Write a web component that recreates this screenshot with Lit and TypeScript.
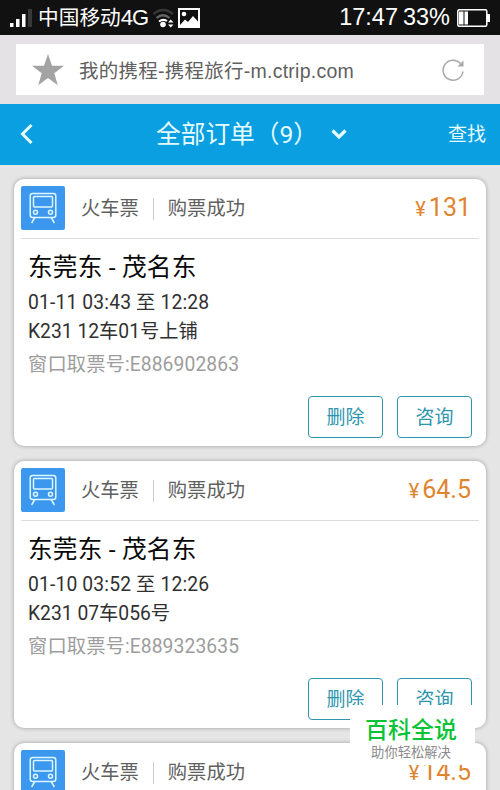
import { LitElement, html, css, svg, TemplateResult } from "lit";
import { customElement, property } from "lit/decorators.js";

interface TrainOrder {
  price: string;
  route: string;
  time: string;
  seat: string;
  ticketNo: string;
}

const ORDERS: TrainOrder[] = [
  {
    price: "131",
    route: "东莞东 - 茂名东",
    time: "01-11 03:43 至 12:28",
    seat: "K231 12车01号上铺",
    ticketNo: "E886902863",
  },
  {
    price: "64.5",
    route: "东莞东 - 茂名东",
    time: "01-10 03:52 至 12:26",
    seat: "K231 07车056号",
    ticketNo: "E889323635",
  },
  {
    price: "14.5",
    route: "",
    time: "",
    seat: "",
    ticketNo: "",
  },
];

const trainIcon = svg`
  <svg width="28" height="32" viewBox="0 0 28 32" fill="none" stroke="#dcf7ff" stroke-width="1.5">
    <rect x="1.2" y="1.5" width="25.6" height="24" rx="2.5"></rect>
    <rect x="4.5" y="4.5" width="19" height="10.5" rx="1"></rect>
    <circle cx="6.5" cy="20.3" r="2"></circle>
    <circle cx="21.5" cy="20.3" r="2"></circle>
    <path d="M5.8 25.5L2.6 31M22.2 25.5L25.4 31"></path>
  </svg>
`;

@customElement("order-card")
class OrderCard extends LitElement {
  @property({ attribute: false }) order!: TrainOrder;

  protected render(): TemplateResult {
    const { order } = this;
    return html`
      <div class="head">
        <span class="icon">${trainIcon}</span>
        <span class="type">火车票</span>
        <span class="bar"></span>
        <span class="status">购票成功</span>
        <span class="price"><span class="yen">¥</span>${order.price}</span>
      </div>
      ${order.route ? this.renderDetail(order) : ""}
    `;
  }

  private renderDetail(order: TrainOrder): TemplateResult {
    return html`
      <div class="detail">
        <div class="route">${order.route}</div>
        <div class="line time">${order.time}</div>
        <div class="line seat">${order.seat}</div>
        <div class="line ticket">窗口取票号:${order.ticketNo}</div>
      </div>
      <div class="actions">
        <button>删除</button>
        <button>咨询</button>
      </div>
    `;
  }

  static styles = css`
    :host {
      display: flex;
      flex-direction: column;
      flex: none;
      box-sizing: border-box;
      height: 267px;
      padding: 0 7px;
      border-radius: 10px;
      background: #fff;
      box-shadow: 0 0 4px rgba(0, 0, 0, 0.32);
    }

    .head {
      display: flex;
      align-items: center;
      box-sizing: border-box;
      height: 60px;
      padding: 0 8px 0 0;
      border-bottom: 1px solid #dcdcdc;
      color: #606060;
      font-size: 19.3px;
      line-height: 28px;
    }

    .icon {
      display: flex;
      align-items: center;
      justify-content: center;
      width: 44px;
      height: 44px;
      margin-bottom: 1px;
      border-radius: 2px;
      background: #3c97ee;
    }

    .type {
      margin-left: 16px;
    }

    .bar {
      width: 1px;
      height: 22px;
      margin: 0 14px;
      background: #ccc;
    }

    .price {
      margin-left: auto;
      color: #e0852f;
      font-size: 25px;
    }

    .yen {
      margin-right: 3px;
      font-size: 20px;
    }

    .detail {
      padding: 13px 7px 0;
      white-space: nowrap;
    }

    .route {
      color: #080808;
      font-size: 24.7px;
      letter-spacing: 0.15px;
      line-height: 32px;
    }

    .line {
      color: #303030;
      font-size: 19.3px;
      line-height: 29px;
    }

    .time {
      margin-top: 4px;
      letter-spacing: 0.15px;
    }

    .ticket {
      margin-top: 4px;
      color: #9d9d9d;
      letter-spacing: 0.1px;
    }

    .actions {
      display: flex;
      justify-content: flex-end;
      gap: 14px;
      margin-top: auto;
      padding: 0 7px 8px;
    }

    button {
      box-sizing: border-box;
      width: 75px;
      height: 42px;
      padding: 0 0 3px;
      border: 1.5px solid #2d96ae;
      border-radius: 4px;
      background: #fff;
      color: #2d96ae;
      font: inherit;
      font-size: 19px;
    }
  `;
}

@customElement("app-root")
class AppRoot extends LitElement {
  protected render(): TemplateResult {
    return html`
      <div class="status">
        ${this.renderSignal()}
        <span class="carrier">中国移动<span class="network">4G</span></span>
        ${this.renderStatusIcons()}
        <span class="clock">17:47</span>
        <span class="percent">33%</span>
        ${this.renderBattery()}
      </div>
      <div class="browser">
        <div class="address">
          <svg class="star" width="32" height="32" viewBox="0 0 32 32" fill="#a3a3a3">
            <path d="M16 0L20 11.8H32L22.3 19.2L25.8 31.2L16 24L6.2 31.2L9.7 19.2L0 11.8H12Z"></path>
          </svg>
          <span class="url">我的携程-携程旅行-m.ctrip.com</span>
          <svg class="reload" width="22" height="22" viewBox="0 0 22 22" fill="none" stroke="#a8a8a8" stroke-width="1.5">
            <path d="M21 12.5A10 10 0 1 1 18.5 4.5"></path>
            <path d="M21.5 1.5V7.5H15.5Z" fill="#a8a8a8" stroke="none"></path>
          </svg>
        </div>
      </div>
      <div class="nav">
        <svg class="back" width="14" height="20" viewBox="0 0 14 20" fill="none" stroke="#e6fbff" stroke-width="3">
          <path d="M11.5 1L2.5 10L11.5 19"></path>
        </svg>
        <span class="title">全部订单（9）</span>
        <svg class="down" width="16" height="12" viewBox="0 0 16 12" fill="none" stroke="#e6fbff" stroke-width="3.2">
          <path d="M1.5 2.5L8 9L14.5 2.5"></path>
        </svg>
        <span class="search">查找</span>
      </div>
      <div class="list">
        ${ORDERS.map((order) => html`<order-card .order=${order}></order-card>`)}
      </div>
      <div class="brand">
        <div class="brand-name">百科全说</div>
        <div class="brand-slogan">助你轻松解决</div>
      </div>
    `;
  }

  private renderSignal(): TemplateResult {
    return html`
      <svg class="signal" width="23" height="18" viewBox="0 0 23 18" fill="#fff">
        <rect x="0" y="14" width="3.5" height="4"></rect>
        <rect x="6" y="10" width="3.5" height="8"></rect>
        <rect x="12" y="5" width="3.5" height="13"></rect>
        <rect x="18" y="0" width="4" height="18" fill="#383838"></rect>
      </svg>
    `;
  }

  private renderStatusIcons(): TemplateResult {
    return html`
      <svg class="wifi" width="23" height="20" viewBox="0 0 23 20" fill="none">
        <path d="M1.5 6Q11 -2 21 6" stroke="#383838" stroke-width="2.4"></path>
        <path d="M4.5 10Q11 4.5 17.5 10" stroke="#666" stroke-width="2.2"></path>
        <path d="M7 13.5Q11 10.5 15 13" stroke="#fff" stroke-width="2"></path>
        <circle cx="11" cy="16.5" r="2.8" fill="#fff"></circle>
        <path d="M16 14.5L18.7 11.5L21.5 14.5ZM16 16.5L18.7 19.5L21.5 16.5Z" fill="#fff"></path>
      </svg>
      <svg class="photo" width="22" height="20" viewBox="0 0 22 20">
        <rect x="1" y="1" width="20" height="18" fill="none" stroke="#fff" stroke-width="2"></rect>
        <circle cx="6" cy="6" r="2.3" fill="#fff"></circle>
        <path d="M2 17L7 11.5L10 14L15 8L20 13.5V18H2Z" fill="#fff"></path>
      </svg>
    `;
  }

  private renderBattery(): TemplateResult {
    return html`
      <svg class="battery" width="33" height="18" viewBox="0 0 33 18">
        <rect x="0.8" y="0.8" width="29" height="16.4" rx="1.5" fill="none" stroke="#fff" stroke-width="1.5"></rect>
        <rect x="2" y="2.5" width="4.5" height="13" fill="#fff"></rect>
        <rect x="7.5" y="2.5" width="3.5" height="13" fill="#fff"></rect>
        <rect x="30" y="5" width="3" height="8" fill="#fff"></rect>
      </svg>
    `;
  }

  static styles = css`
    :host {
      display: flex;
      flex-direction: column;
      position: relative;
      box-sizing: border-box;
      width: 500px;
      height: 790px;
      overflow: hidden;
      background: #e5e5e5;
      font-family: Roboto, "Noto Sans CJK SC", sans-serif;
      white-space: nowrap;
    }

    svg {
      flex: none;
    }

    .status {
      display: flex;
      align-items: center;
      flex: none;
      box-sizing: border-box;
      height: 35px;
      padding: 0 10px;
      background: #111;
      color: #fff;
      font-family: "Liberation Sans", "Noto Sans CJK SC", sans-serif;
      font-size: 23.5px;
      line-height: 35px;
    }

    .carrier {
      margin-left: 5px;
      font-size: 20.7px;
    }

    .network {
      font-size: 22px;
      letter-spacing: -1px;
    }

    .wifi {
      margin-left: 4px;
    }

    .photo {
      margin-left: 3px;
    }

    .clock {
      margin-left: auto;
    }

    .percent {
      margin: 0 7px 0 5px;
    }

    .browser {
      flex: none;
      box-sizing: border-box;
      height: 69px;
      padding: 9px 16px;
      background: #e4e2e5;
    }

    .address {
      display: flex;
      align-items: center;
      box-sizing: border-box;
      height: 51px;
      padding: 0 20px 0 16px;
      background: #fff;
      color: #606060;
      font-family: "Liberation Sans", "Noto Sans CJK SC", sans-serif;
      font-size: 19.5px;
    }

    .url {
      margin-left: 15px;
      padding-bottom: 1px;
      letter-spacing: 0.25px;
    }

    .reload {
      margin-left: auto;
    }

    .nav {
      display: flex;
      align-items: center;
      flex: none;
      box-sizing: border-box;
      height: 61px;
      padding: 0 14px 1px 20px;
      background: #0a9fe0;
      color: #e6fbff;
    }

    .title {
      margin-left: 122px;
      padding-bottom: 5px;
      font-size: 24.7px;
    }

    .down {
      margin-left: 13px;
    }

    .search {
      margin-left: auto;
      padding-bottom: 3px;
      font-size: 19px;
    }

    .list {
      display: flex;
      flex-direction: column;
      flex: none;
      gap: 15px;
      padding: 14px 14px 0;
    }

    .brand {
      position: absolute;
      top: 705px;
      left: 350px;
      box-sizing: border-box;
      width: 125px;
      height: 60px;
      padding: 11px 3px 0 0;
      background: #fff;
      text-align: center;
    }

    .brand-name {
      color: #0bc336;
      font-size: 23px;
      font-weight: 500;
      line-height: 30px;
    }

    .brand-slogan {
      color: #8a8a8a;
      font-size: 13.3px;
      line-height: 13px;
    }
  `;
}

declare global {
  interface HTMLElementTagNameMap {
    "order-card": OrderCard;
    "app-root": AppRoot;
  }
}
